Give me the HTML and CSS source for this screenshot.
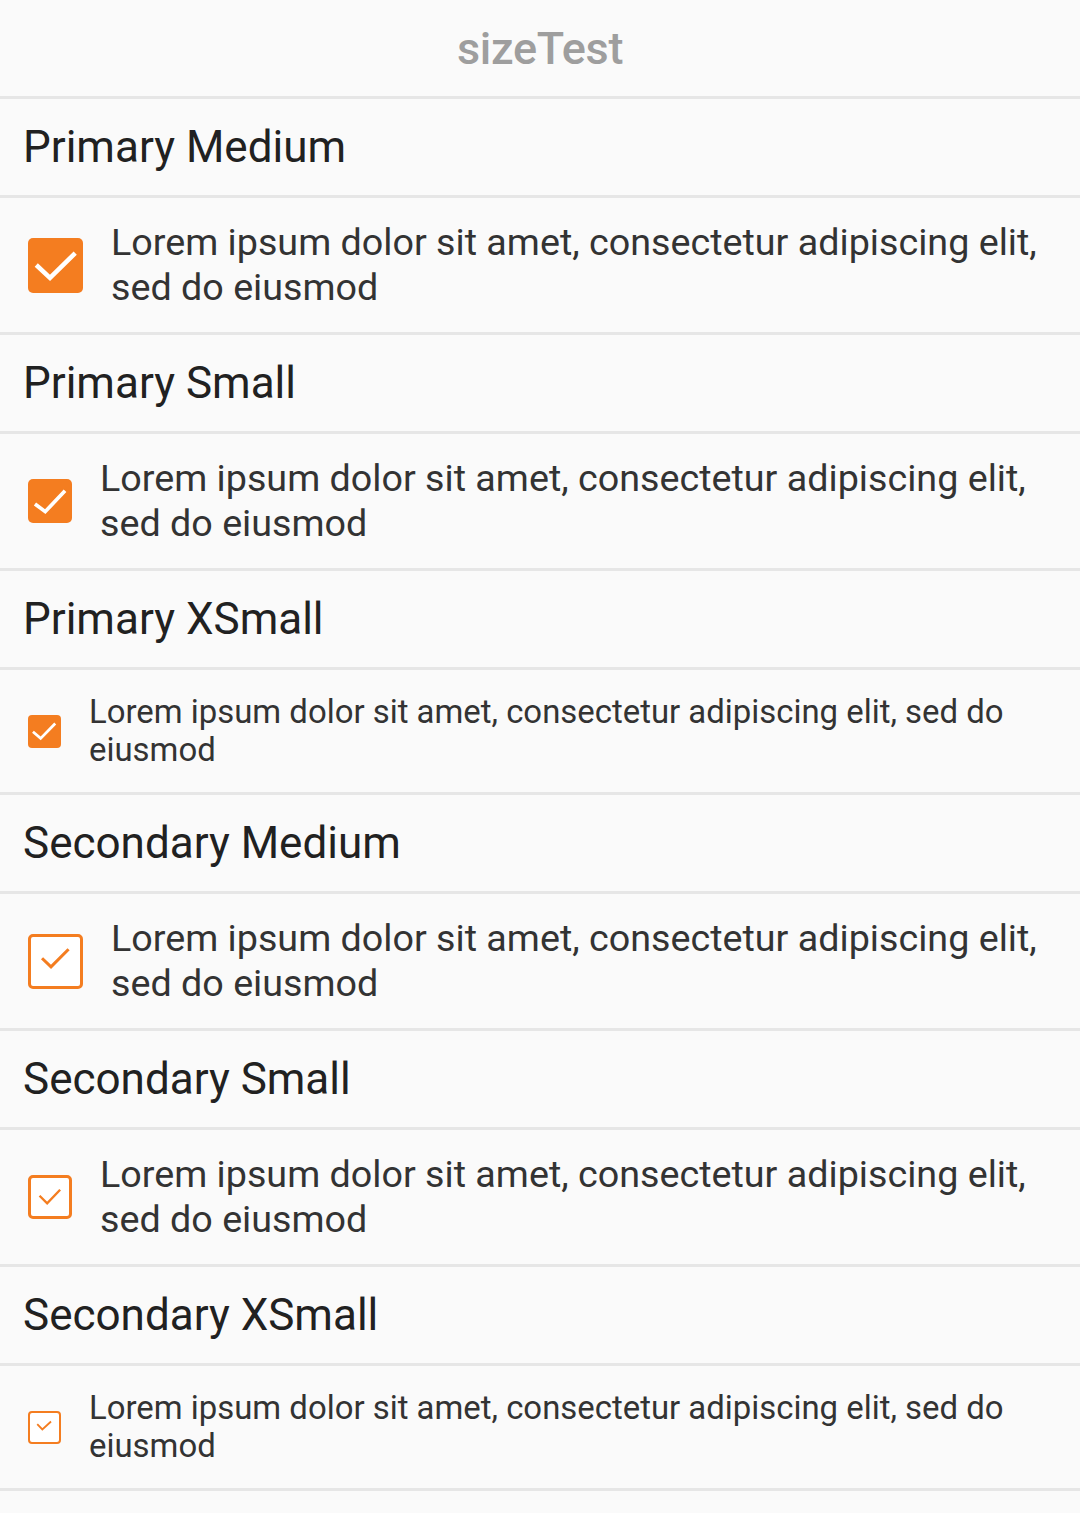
FILE: index.html
```html
<!DOCTYPE html>
<html>
<head>
<meta charset="utf-8">
<link rel="stylesheet" href="styles.css">
</head>
<body>
<div class="app">
  <header class="topbar"><h1 class="title">sizeTest</h1></header>

  <div class="section-title">Primary Medium</div>
  <div class="row">
    <span class="cb cb-md cb-primary"><svg viewBox="0 0 24 24"><polyline points="3.6,11.8 9.6,17.4 20.6,6.6"/></svg></span>
    <span class="label label-lg">Lorem ipsum dolor sit amet, consectetur adipiscing elit, sed do eiusmod</span>
  </div>

  <div class="section-title">Primary Small</div>
  <div class="row">
    <span class="cb cb-sm cb-primary"><svg viewBox="0 0 24 24"><polyline points="3.8,13.6 9.4,17.8 20.2,6.4"/></svg></span>
    <span class="label label-lg">Lorem ipsum dolor sit amet, consectetur adipiscing elit, sed do eiusmod</span>
  </div>

  <div class="section-title">Primary XSmall</div>
  <div class="row row-xs">
    <span class="cb cb-xs cb-primary"><svg viewBox="0 0 24 24"><polyline points="3.6,12.2 9.2,17 19.8,6.2"/></svg></span>
    <span class="label label-xs">Lorem ipsum dolor sit amet, consectetur adipiscing elit, sed do eiusmod</span>
  </div>

  <div class="section-title">Secondary Medium</div>
  <div class="row">
    <span class="cb cb-md cb-secondary"><svg viewBox="0 0 24 24"><polyline points="5.4,10.4 9.8,14.6 18.4,6"/></svg></span>
    <span class="label label-lg">Lorem ipsum dolor sit amet, consectetur adipiscing elit, sed do eiusmod</span>
  </div>

  <div class="section-title">Secondary Small</div>
  <div class="row">
    <span class="cb cb-sm cb-secondary"><svg viewBox="0 0 24 24"><polyline points="5.4,11.2 10.2,16 18.4,7.4"/></svg></span>
    <span class="label label-lg">Lorem ipsum dolor sit amet, consectetur adipiscing elit, sed do eiusmod</span>
  </div>

  <div class="section-title">Secondary XSmall</div>
  <div class="row row-xs">
    <span class="cb cb-xs cb-secondary"><svg viewBox="0 0 24 24"><polyline points="6,9.2 10.2,13.6 17.4,7"/></svg></span>
    <span class="label label-xs">Lorem ipsum dolor sit amet, consectetur adipiscing elit, sed do eiusmod</span>
  </div>
</div>
</body>
</html>
```

FILE: styles.css
```css
html, body {
  margin: 0;
  padding: 0;
  background: #fafafa;
}

body {
  font-family: Roboto, "Noto Sans", "Liberation Sans", sans-serif;
  color: #333333;
}

.app {
  display: flex;
  flex-direction: column;
}

.topbar {
  height: 96px;
  border-bottom: 3px solid #e6e6e6;
  display: flex;
  align-items: center;
  justify-content: center;
}

.title {
  margin: 0;
  font-size: 45px;
  font-weight: 500;
  color: #9e9e9e;
  letter-spacing: -0.3px;
}

.section-title {
  box-sizing: border-box;
  height: 99px;
  border-bottom: 3px solid #e6e6e6;
  display: flex;
  align-items: center;
  padding-left: 23px;
  font-size: 44px;
  color: #212121;
}

.row {
  box-sizing: border-box;
  height: 137px;
  border-bottom: 3px solid #e6e6e6;
  display: flex;
  align-items: center;
  gap: 28px;
  padding: 0 30px 0 28px;
}

.row-xs {
  height: 125px;
}

.label {
  flex: 1;
}

.label-lg {
  font-size: 37.7px;
  line-height: 45px;
}

.label-xs {
  font-size: 32.9px;
  line-height: 38px;
}

.cb {
  flex: none;
  box-sizing: border-box;
  display: flex;
  align-items: center;
  justify-content: center;
}

.cb svg {
  width: 100%;
  height: 100%;
  display: block;
  fill: none;
  stroke-linecap: butt;
  stroke-linejoin: miter;
}

.cb-md { width: 55px; height: 55px; border-radius: 5px; }
.cb-sm { width: 44px; height: 44px; border-radius: 5px; }
.cb-xs { width: 33px; height: 33px; border-radius: 4px; }

.cb-primary {
  background: #f47d20;
}

.cb-primary svg {
  stroke: #ffffff;
  stroke-width: 2;
}

.cb-secondary {
  background: #ffffff;
  border: 3px solid #f47d20;
}

.cb-xs.cb-secondary {
  border-width: 2px;
}

.cb-secondary svg {
  stroke: #f47d20;
  stroke-width: 1.5;
}
```
